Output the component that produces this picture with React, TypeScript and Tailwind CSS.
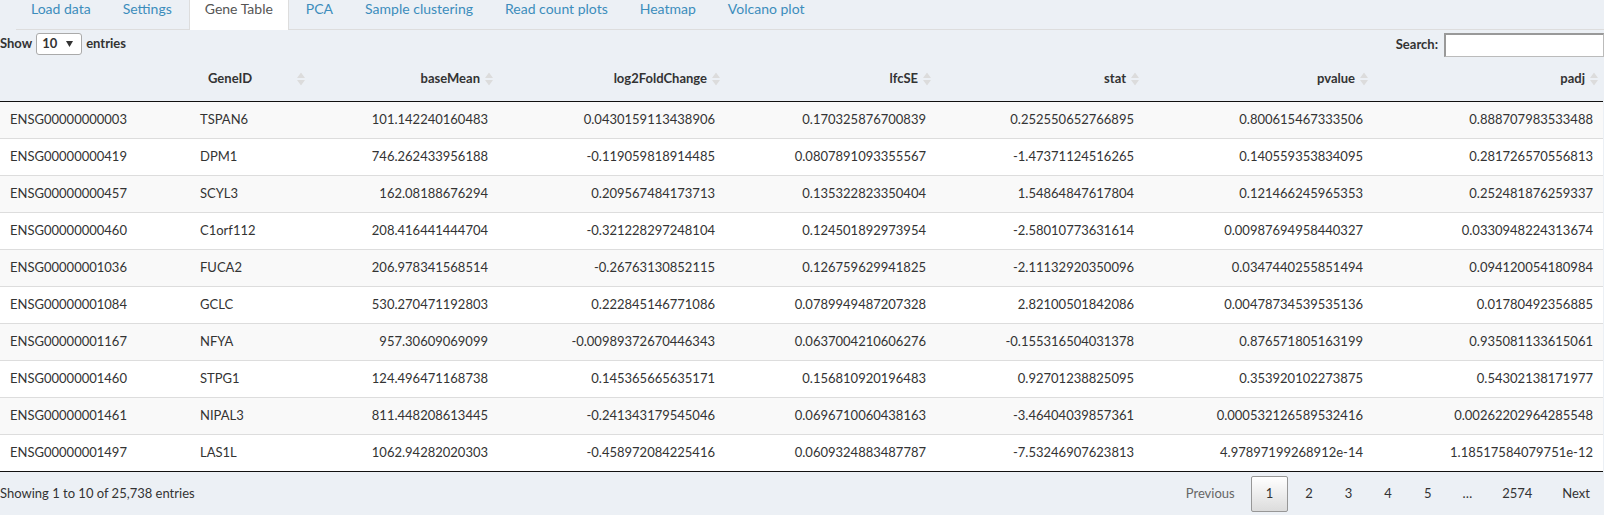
const tabs = ['Load data', 'Settings', 'Gene Table', 'PCA', 'Sample clustering', 'Read count plots', 'Heatmap', 'Volcano plot'];

const columns = [
  { label: '', align: 'left', width: 'w-[190px]' },
  { label: 'GeneID', align: 'left', width: 'w-[120px]' },
  { label: 'baseMean', align: 'right', width: 'w-[188px]' },
  { label: 'log2FoldChange', align: 'right', width: 'w-[227px]' },
  { label: 'lfcSE', align: 'right', width: 'w-[211px]' },
  { label: 'stat', align: 'right', width: 'w-[208px]' },
  { label: 'pvalue', align: 'right', width: 'w-[229px]' },
  { label: 'padj', align: 'right', width: 'w-[230px]' },
];

const rows = [
  ['ENSG00000000003', 'TSPAN6', '101.142240160483', '0.0430159113438906', '0.170325876700839', '0.252550652766895', '0.800615467333506', '0.888707983533488'],
  ['ENSG00000000419', 'DPM1', '746.262433956188', '-0.119059818914485', '0.0807891093355567', '-1.47371124516265', '0.140559353834095', '0.281726570556813'],
  ['ENSG00000000457', 'SCYL3', '162.08188676294', '0.209567484173713', '0.135322823350404', '1.54864847617804', '0.121466245965353', '0.252481876259337'],
  ['ENSG00000000460', 'C1orf112', '208.416441444704', '-0.321228297248104', '0.124501892973954', '-2.58010773631614', '0.00987694958440327', '0.0330948224313674'],
  ['ENSG00000001036', 'FUCA2', '206.978341568514', '-0.26763130852115', '0.126759629941825', '-2.11132920350096', '0.0347440255851494', '0.094120054180984'],
  ['ENSG00000001084', 'GCLC', '530.270471192803', '0.222845146771086', '0.0789949487207328', '2.82100501842086', '0.00478734539535136', '0.01780492356885'],
  ['ENSG00000001167', 'NFYA', '957.30609069099', '-0.00989372670446343', '0.0637004210606276', '-0.155316504031378', '0.876571805163199', '0.935081133615061'],
  ['ENSG00000001460', 'STPG1', '124.496471168738', '0.145365665635171', '0.156810920196483', '0.92701238825095', '0.353920102273875', '0.54302138171977'],
  ['ENSG00000001461', 'NIPAL3', '811.448208613445', '-0.241343179545046', '0.0696710060438163', '-3.46404039857361', '0.000532126589532416', '0.00262202964285548'],
  ['ENSG00000001497', 'LAS1L', '1062.94282020303', '-0.458972084225416', '0.0609324883487787', '-7.53246907623813', '4.97897199268912e-14', '1.18517584079751e-12'],
];

const SortIcon = () => (
  <svg width="8" height="13" viewBox="0 0 8 13" className="absolute right-[5px] top-1/2 -translate-y-1/2">
    <path d="M4 0 L8 5.5 L0 5.5 Z" fill="#dcdcdc" />
    <path d="M4 13 L8 7.5 L0 7.5 Z" fill="#dcdcdc" />
  </svg>
);

const App = () => {
  return (
    <div className="w-[1604px] h-[515px] overflow-hidden bg-[#ecf0f5] text-[#333] text-[13px]" style={{ fontFamily: 'Lato, "Open Sans", sans-serif' }}>
      {/* Tabs */}
      <div className="ml-[16px] h-[30px] flex border-b border-[#dddddd]">
        {tabs.map((t) => (
          <div
            key={t}
            className={
              t === 'Gene Table'
                ? 'h-[30px] px-[15px] mr-[2px] pb-[13px] flex items-end bg-white text-[#555] border-x border-[#dddddd] text-[14px] leading-[17px]'
                : 'h-[30px] px-[15px] mr-[2px] pb-[13px] flex items-end text-[#3c8dbc] text-[14px] leading-[17px]'
            }
          >
            {t}
          </div>
        ))}
      </div>

      {/* Controls */}
      <div className="h-[27px] flex items-center justify-between font-bold">
        <div className="flex items-center gap-[4px]">
          <span>Show</span>
          <div className="w-[46px] h-[22px] bg-white border border-[#aaa] rounded-[3px] flex items-center justify-between pl-[5px] pr-[8px]">
            <span>10</span>
            <svg width="7" height="6" viewBox="0 0 7 6">
              <path d="M0 0 L7 0 L3.5 6 Z" fill="#333" />
            </svg>
          </div>
          <span>entries</span>
        </div>
        <div className="flex items-center gap-[6px] mt-[2px]">
          <span>Search:</span>
          <div className="w-[160px] h-[24px] bg-white border border-[#bbb] border-t-2 border-l-2 border-t-[#999] border-l-[#999]" />
        </div>
      </div>

      {/* Table */}
      <table className="table-fixed w-[1603px] border-collapse">
        <colgroup>
          {columns.map((c, i) => (
            <col key={i} className={c.width} />
          ))}
        </colgroup>
        <thead>
          <tr className="h-[44px] border-b border-[#111]">
            {columns.map((c, i) => (
              <th
                key={i}
                className={`relative px-[18px] font-bold ${c.align === 'right' ? 'text-right' : 'text-left'}`}
              >
                {c.label}
                {i > 0 && <SortIcon />}
              </th>
            ))}
          </tr>
        </thead>
        <tbody>
          {rows.map((r, ri) => (
            <tr key={ri} className={`h-[37px] border-t border-[#dddddd] first:border-t-0 ${ri % 2 === 0 ? 'bg-[#f9f9f9]' : 'bg-white'}`}>
              {r.map((v, ci) => (
                <td
                  key={ci}
                  className={`px-[10px] whitespace-nowrap ${columns[ci].align === 'right' ? 'text-right' : 'text-left'}`}
                >
                  {v}
                </td>
              ))}
            </tr>
          ))}
        </tbody>
      </table>
      <div className="w-[1603px] border-t border-[#111]" />

      {/* Footer */}
      <div className="h-[43px] flex items-center justify-between">
        <span>Showing 1 to 10 of 25,738 entries</span>
        <div className="flex items-center h-[36px]">
          <span className="px-[14px] text-[#666] ml-[2px]">Previous</span>
          <span className="h-[36px] min-w-[37px] px-[14px] ml-[2px] flex items-center justify-center border border-[#979797] rounded-[2px] bg-gradient-to-b from-white to-[#dcdcdc]">1</span>
          {['2', '3', '4', '5'].map((p) => (
            <span key={p} className="h-[36px] min-w-[37px] px-[14px] ml-[2px] flex items-center justify-center border border-transparent">{p}</span>
          ))}
          <span className="h-[36px] px-[14px] ml-[2px] flex items-center">…</span>
          <span className="h-[36px] px-[14px] ml-[2px] flex items-center">2574</span>
          <span className="h-[36px] px-[14px] ml-[2px] flex items-center">Next</span>
        </div>
      </div>
    </div>
  );
};

export default App;
